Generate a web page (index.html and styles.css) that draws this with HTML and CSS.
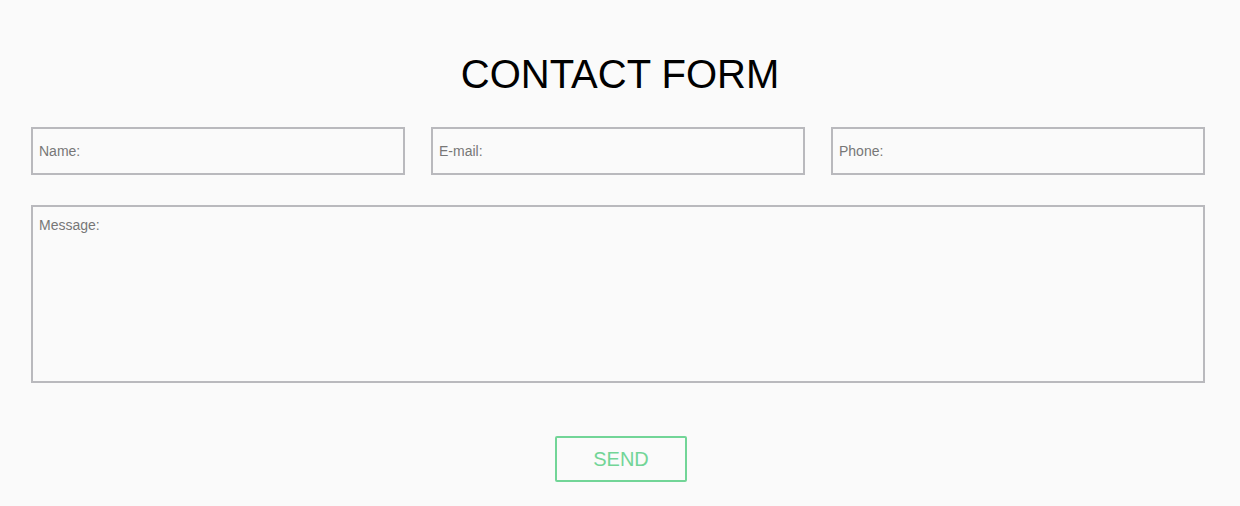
FILE: index.html
```html
<!DOCTYPE html>
<html lang="en">
<head>
<meta charset="utf-8">
<title>Contact form</title>
<link rel="stylesheet" href="styles.css">
</head>
<body>
<main class="page">
  <h1 class="title">CONTACT FORM</h1>
  <form class="form">
    <div class="row">
      <input class="field" type="text" placeholder="Name:">
      <input class="field" type="email" placeholder="E-mail:">
      <input class="field" type="tel" placeholder="Phone:">
    </div>
    <textarea class="message" placeholder="Message:"></textarea>
    <div class="actions">
      <button class="send" type="button">SEND</button>
    </div>
  </form>
</main>
</body>
</html>
```
FILE: styles.css
```css
html, body {
  margin: 0;
  padding: 0;
  background: #fafafa;
}
body {
  font-family: "Liberation Sans", Arial, sans-serif;
  color: #000;
}
.page {
  padding: 51px 35px 0 31px;
}
.title {
  margin: 0;
  font-size: 40px;
  line-height: 46px;
  font-weight: normal;
  text-align: center;
  padding-left: 4px;
}
.form {
  margin-top: 30px;
  display: flex;
  flex-direction: column;
}
.row {
  display: grid;
  grid-template-columns: repeat(3, 1fr);
  gap: 26px;
}
.field, .message {
  box-sizing: border-box;
  border: 2px solid #b9b9bd;
  background: #fafafa;
  font-family: "Liberation Sans", Arial, sans-serif;
  font-size: 14px;
  color: #333;
  padding: 0 6px;
  margin: 0;
  outline: none;
  border-radius: 0;
}
.field {
  height: 48px;
  width: 100%;
}
.message {
  margin-top: 30px;
  height: 178px;
  width: 100%;
  padding: 10px 6px;
  resize: none;
  line-height: 16px;
}
.field::placeholder, .message::placeholder {
  color: #777;
  opacity: 1;
}
.actions {
  display: flex;
  justify-content: center;
  margin-top: 53px;
  padding-left: 6px;
}
.send {
  box-sizing: border-box;
  width: 132px;
  height: 46px;
  border: 2px solid #72d597;
  border-radius: 2px;
  background: transparent;
  color: #72d597;
  font-family: "Liberation Sans", Arial, sans-serif;
  font-size: 20px;
  padding: 0;
}
```
